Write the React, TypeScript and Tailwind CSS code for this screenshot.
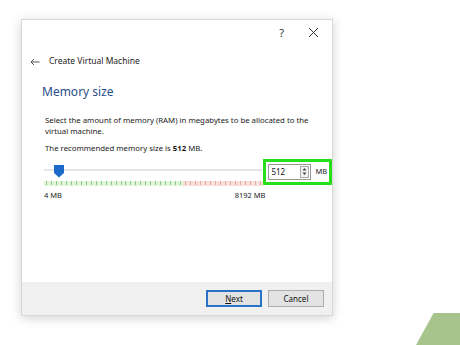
import React from 'react';

const font = { fontFamily: '"Noto Sans", "Open Sans", sans-serif' };

const Ticks: React.FC = () => {
  const ticks = Array.from({ length: 44 });
  return (
    <div className="flex h-[5px] w-full">
      {ticks.map((_, i) => (
        <div
          key={i}
          className={`flex-1 flex items-center justify-center ${i < 28 ? 'bg-[#e3f6dc]' : 'bg-[#f9e0dc]'}`}
        >
          <div className={`w-[1px] h-[4px] ${i < 28 ? 'bg-[#8ccb86]' : 'bg-[#e8a59c]'}`} />
        </div>
      ))}
    </div>
  );
};

export default function App() {
  return (
    <div className="relative w-[460px] h-[345px] bg-white overflow-hidden" style={font}>
      {/* Dialog */}
      <div className="ml-[21px] mt-[19px] w-[312px] h-[297px] bg-white border border-[#d8d8d8] shadow-[0_2px_10px_rgba(0,0,0,0.18)] flex flex-col">
        {/* Title bar */}
        <div className="h-[25px] flex items-center justify-end pr-[13px] gap-[24px] text-[#333]">
          <span className="text-[11px] leading-none">?</span>
          <svg width="11" height="11" viewBox="0 0 11 11">
            <path d="M1 1 L10 10 M10 1 L1 10" stroke="#333" strokeWidth="1" />
          </svg>
        </div>

        {/* Header */}
        <div className="h-[33px] flex items-center pl-[8px] gap-[9px] text-[#222]">
          <svg width="10" height="8" viewBox="0 0 10 8">
            <path d="M9.5 4 H1 M4 1 L1 4 L4 7" stroke="#444" strokeWidth="0.9" fill="none" />
          </svg>
          <span className="text-[8.5px]">Create Virtual Machine</span>
        </div>

        {/* Content */}
        <div className="flex-1 flex flex-col pl-[20px]">
          <div className="mt-[4px] text-[12px] text-[#2b4f8c] leading-[20px]">Memory size</div>

          <div className="pl-[3px] mt-[13px] text-[7.8px] text-[#1a1a1a] leading-[10.5px]">
            <p>
              Select the amount of memory (RAM) in megabytes to be allocated to the
              <br />
              virtual machine.
            </p>
            <p className="mt-[7px]">
              The recommended memory size is <b>512</b> MB.
            </p>
          </div>

          {/* Slider row */}
          <div className="mt-[9px] flex items-start">
            <div className="ml-[2px] w-[220px] flex flex-col">
              <div className="relative h-[15px] flex items-center">
                <div className="w-full h-[2px] bg-[#e6e6e6]" />
                <div className="absolute left-[10px] top-[2px] w-[10px] h-[13px] bg-[#1b6ac9] [clip-path:polygon(0_0,100%_0,100%_65%,50%_100%,0_65%)]" />
              </div>
              <div className="mt-[3px]">
                <Ticks />
              </div>
              <div className="mt-[6px] flex justify-between text-[7.5px] text-[#222] leading-none">
                <span>4 MB</span>
                <span className="mr-[-3px]">8192 MB</span>
              </div>
            </div>

            {/* Spin box (highlighted) */}
            <div className="ml-[1px] -mt-[4px] w-[69px] h-[26px] border-[3px] border-[#27e01a] flex items-center pl-[2px] gap-[4px] bg-white">
              <div className="w-[43px] h-[16px] border border-[#9a9a9a] flex items-center justify-between pl-[2px] pr-[1px]">
                <span className="text-[8px] text-[#111] leading-none">512</span>
                <div className="w-[9px] h-[12px] border border-[#aaa] flex flex-col items-center justify-center bg-[#f2f2f2]">
                  <svg width="5" height="9" viewBox="0 0 5 9">
                    <path d="M0.5 3.5 L2.5 1 L4.5 3.5 Z M0.5 5.5 L2.5 8 L4.5 5.5 Z" fill="#444" />
                  </svg>
                </div>
              </div>
              <span className="text-[7.5px] text-[#222]">MB</span>
            </div>
          </div>
        </div>

        {/* Footer */}
        <div className="h-[33px] bg-[#f0f0f0] flex items-center justify-end pr-[8px] gap-[6px]">
          <button className="w-[56px] h-[17px] border border-[#2a72c8] bg-[#e3e3e3] text-[8px] text-[#111] leading-none shadow-[inset_0_0_0_1px_#2a72c8]">
            <u>N</u>ext
          </button>
          <button className="w-[56px] h-[17px] border border-[#adadad] bg-[#e3e3e3] text-[8px] text-[#111] leading-none">
            Cancel
          </button>
        </div>
      </div>

      {/* Decorative corner shape */}
      <div className="absolute left-[416px] top-[313px] w-[44px] h-[32px] bg-[#a6c48c] [clip-path:polygon(40%_0,100%_0,100%_100%,0_100%)]" />
    </div>
  );
}
